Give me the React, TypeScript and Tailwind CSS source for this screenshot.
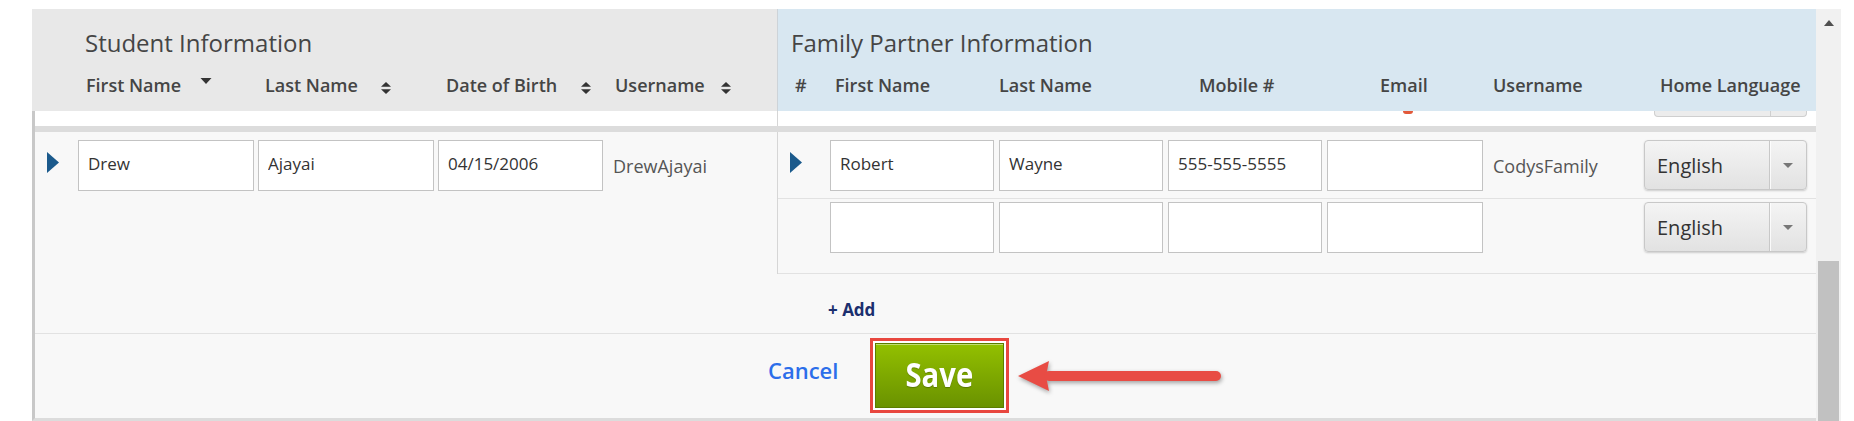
const SortBoth = ({ className = "" }: { className?: string }) => (
  <svg width="12" height="12" viewBox="0 0 12 12" className={"fill-[#333] shrink-0 " + className}>
    <path d="M1 4.8 L6 0 L11 4.8 Z" />
    <path d="M1 7.2 L6 12 L11 7.2 Z" />
  </svg>
);

const SortDown = ({ className = "" }: { className?: string }) => (
  <svg width="12" height="6" viewBox="0 0 12 6" className={"fill-[#333] shrink-0 " + className}>
    <path d="M0.5 0 L11.5 0 L6 6 Z" />
  </svg>
);

const RowArrow = () => (
  <svg width="12" height="21" viewBox="0 0 12 21" className="mt-[12px] shrink-0 fill-[#1b5a8c]">
    <path d="M0 0 L12 10.5 L0 21 Z" />
  </svg>
);

function Field({ value = "", w }: { value?: string; w: string }) {
  return (
    <input
      readOnly
      defaultValue={value}
      className={`${w} h-[51px] shrink-0 border border-[#c3c3c3] bg-white px-[9px] pb-[4px] text-[17px] text-[#333] outline-none`}
    />
  );
}

function LangSelect() {
  return (
    <div className="ml-auto mr-[9px] flex h-[50px] w-[163px] shrink-0 rounded-[4px] border border-[#c8c8c8] bg-linear-to-b from-[#f4f4f4] to-[#e2e2e2] shadow-[0_1px_2px_rgba(0,0,0,0.18)]">
      <div className="flex flex-1 items-center pl-[12px] pt-[2px] text-[20px] text-[#333]">English</div>
      <div className="flex w-[37px] items-center justify-center border-l border-[#c8c8c8] shadow-[inset_1px_0_0_rgba(255,255,255,0.8)]">
        <svg width="10" height="5" viewBox="0 0 10 5" className="fill-[#777]">
          <path d="M0 0 L10 0 L5 5 Z" />
        </svg>
      </div>
    </div>
  );
}

function Arrow() {
  return (
    <svg
      width="206"
      height="40"
      viewBox="0 0 206 40"
      className="ml-[9px] mt-[18px] drop-shadow-[1px_2px_2px_rgba(0,0,0,0.35)]"
    >
      <path d="M0 20 L31 5 L28 20 L31 35 Z" fill="#e84c44" />
      <rect x="26" y="15" width="177" height="10" rx="5" fill="#e84c44" />
    </svg>
  );
}

export default function App() {
  return (
    <div className="flex h-[421px] w-[1854px] bg-white pl-[32px] pt-[9px] font-['Open_Sans',sans-serif]">
      <div className="flex w-[1784px] flex-col">
        {/* column headers */}
        <div className="flex h-[102px] text-[#454545]">
          <div className="w-[745px] bg-[#e8e8e8] pl-[53px] pt-[18px]">
            <div className="text-[24px] leading-[32px]">Student Information</div>
            <div className="mt-[14px] flex pl-[1px] text-[18px] font-semibold leading-[24px]">
              <div className="flex w-[179px]">
                <span className="w-[114px]">First Name</span>
                <SortDown className="mt-[5px]" />
              </div>
              <div className="flex w-[181px]">
                <span className="w-[115px]">Last Name</span>
                <SortBoth className="mt-[9px]" />
              </div>
              <div className="flex w-[169px]">
                <span className="w-[134px]">Date of Birth</span>
                <SortBoth className="mt-[9px]" />
              </div>
              <div className="flex">
                <span className="w-[105px]">Username</span>
                <SortBoth className="mt-[9px]" />
              </div>
            </div>
          </div>
          <div className="w-px bg-[#cdd3d8]" />
          <div className="flex-1 bg-[#d8e7f1] pl-[13px] pt-[18px]">
            <div className="text-[24px] leading-[32px]">Family Partner Information</div>
            <div className="mt-[14px] flex pl-[4px] text-[18px] font-semibold leading-[24px]">
              <div className="w-[40px]">#</div>
              <div className="w-[164px]">First Name</div>
              <div className="w-[200px]">Last Name</div>
              <div className="w-[181px]">Mobile #</div>
              <div className="w-[113px]">Email</div>
              <div className="w-[167px]">Username</div>
              <div>Home Language</div>
            </div>
          </div>
        </div>

        {/* body */}
        <div className="flex flex-1 flex-col border-b-[3px] border-l-[3px] border-b-[#dcdcdc] border-l-[#c8c8c8] bg-[#f8f8f8]">
          <div className="flex h-[15px] bg-white">
            <div className="w-[743px] border-r border-[#d6d6d6]" />
            <div className="flex flex-1 items-start">
              <div className="ml-[625px] h-[3px] w-[10px] rounded-b-full bg-[#e2593a]" />
              <div className="ml-auto mr-[9px] flex h-[6px] w-[153px] rounded-b-[4px] border border-t-0 border-[#cfcfcf] bg-[#ececec]">
                <div className="w-[116px] border-r border-[#cfcfcf]" />
              </div>
            </div>
          </div>
          <div className="h-[6px] bg-[#dcdcdc]" />

          <div className="flex h-[142px]">
            <div className="flex w-[743px] items-start border-r border-[#d6d6d6] pl-[12px] pt-[8px]">
              <RowArrow />
              <div className="ml-[19px] flex gap-[4px]">
                <Field w="w-[176px]" value="Drew" />
                <Field w="w-[176px]" value="Ajayai" />
                <Field w="w-[165px]" value="04/15/2006" />
              </div>
              <div className="ml-[10px] mt-[13px] text-[18px] text-[#555]">DrewAjayai</div>
            </div>
            <div className="flex flex-1 flex-col">
              <div className="flex h-[67px] items-start border-b border-[#e2e2e2] pl-[12px] pt-[8px]">
                <RowArrow />
                <div className="ml-[28px] flex gap-[5px]">
                  <Field w="w-[164px]" value="Robert" />
                  <Field w="w-[164px]" value="Wayne" />
                  <Field w="w-[154px]" value="555-555-5555" />
                  <Field w="w-[156px]" />
                </div>
                <div className="ml-[10px] mt-[13px] text-[18px] text-[#555]">CodysFamily</div>
                <LangSelect />
              </div>
              <div className="flex h-[75px] items-start border-b border-[#e2e2e2] pl-[12px] pt-[3px]">
                <div className="w-[12px] shrink-0" />
                <div className="ml-[28px] flex gap-[5px]">
                  <Field w="w-[164px]" />
                  <Field w="w-[164px]" />
                  <Field w="w-[154px]" />
                  <Field w="w-[156px]" />
                </div>
                <LangSelect />
              </div>
            </div>
          </div>

          <div className="h-[60px] border-b border-[#e2e2e2] pl-[793px] pt-[24px]">
            <span className="text-[17px] font-bold leading-[22px] text-[#1b2f6e]">+ Add</span>
          </div>

          <div className="flex flex-1 items-start pl-[733px] pt-[4px]">
            <div className="mt-[17px] w-[102px] text-[22px] font-semibold leading-[30px] text-[#2c6eea]">
              Cancel
            </div>
            <div className="h-[75px] w-[139px] border-[3px] border-[#e8473f] bg-white p-[2px]">
              <div className="flex h-full w-full items-center justify-center border border-[#5b7d00] bg-linear-to-b from-[#93c000] to-[#6a9200] shadow-[inset_0_1px_0_rgba(255,255,255,0.45)]">
                <span className="scale-x-[0.86] pb-[2px] text-[34px] font-bold text-white [text-shadow:0_1px_1px_rgba(0,0,0,0.25)]">
                  Save
                </span>
              </div>
            </div>
            <Arrow />
          </div>
        </div>
      </div>

      {/* scrollbar */}
      <div className="flex w-[25px] flex-col items-center bg-[#f1f1f1]">
        <svg width="10" height="6" viewBox="0 0 10 6" className="mt-[11px] fill-[#505050]">
          <path d="M0 6 L5 0 L10 6 Z" />
        </svg>
        <div className="mt-auto h-[160px] w-[21px] bg-[#c1c1c1]" />
      </div>
    </div>
  );
}
